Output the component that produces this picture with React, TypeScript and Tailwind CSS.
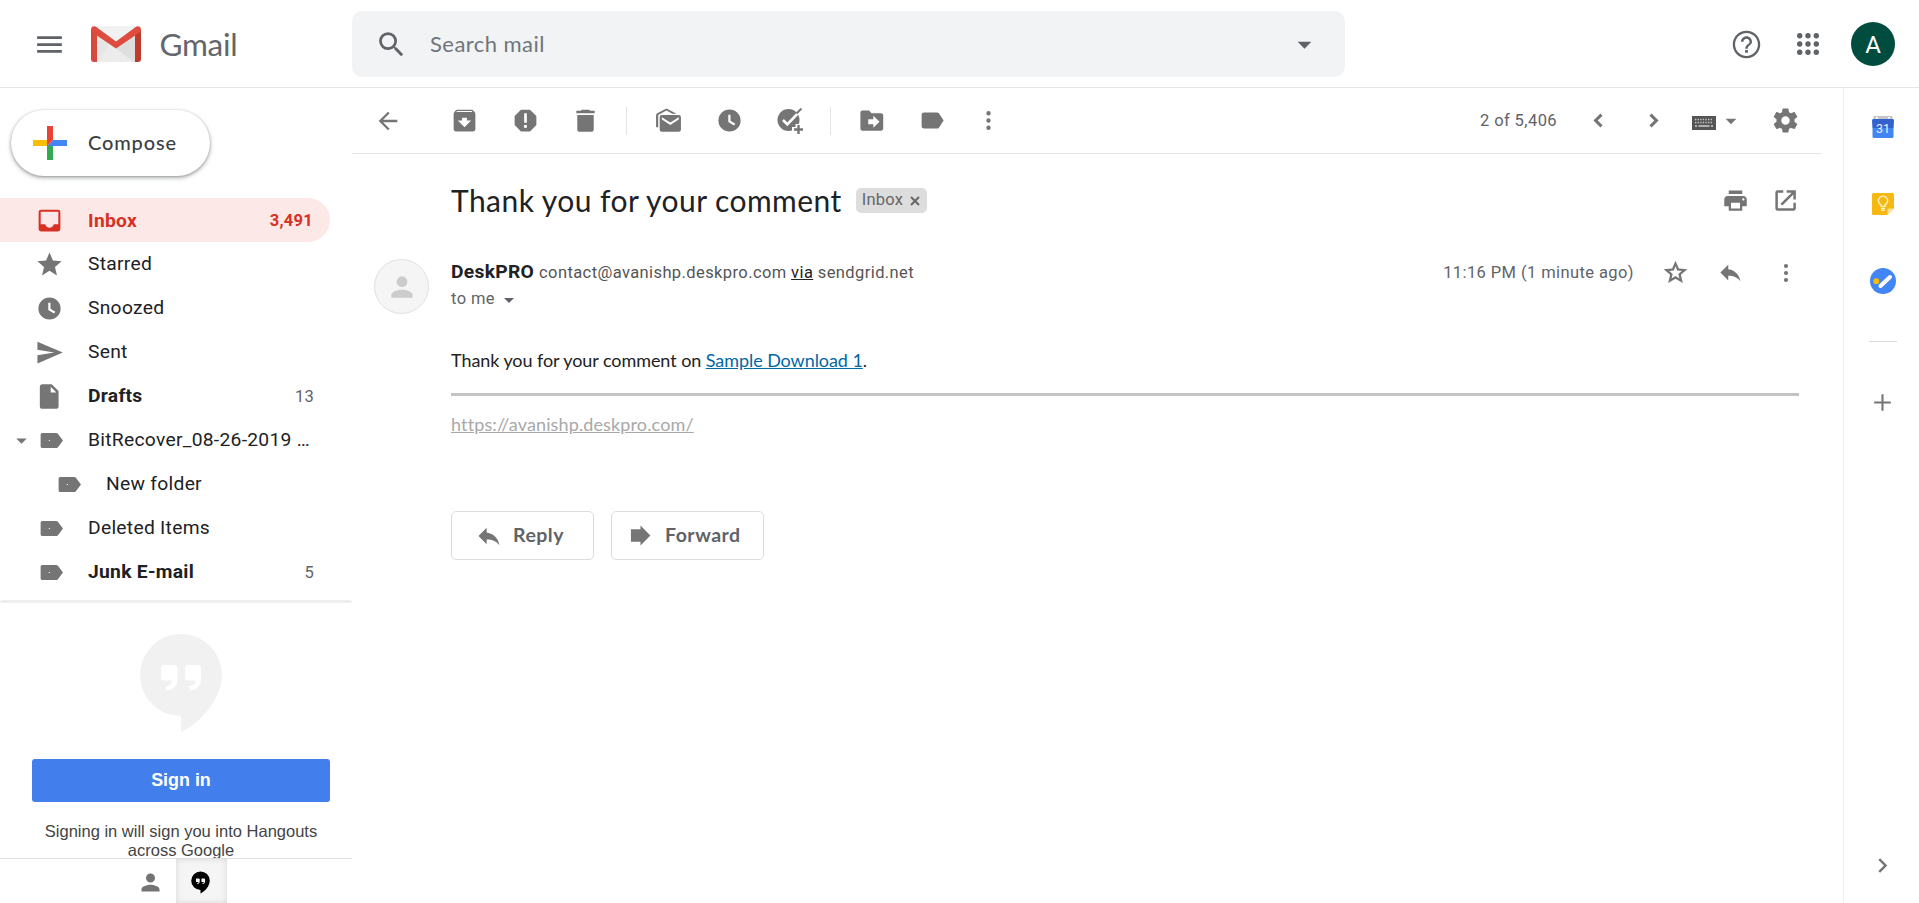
import type { ReactNode } from "react";

type IconProps = { d: string; className?: string; box?: string };

function Icon({ d, className = "size-[29px]", box = "0 0 24 24" }: IconProps) {
  return (
    <svg viewBox={box} className={`shrink-0 ${className}`} fill="currentColor" fillRule="evenodd">
      <path d={d} />
    </svg>
  );
}

const P = {
  menu: "M3 18h18v-2H3v2zm0-5h18v-2H3v2zm0-7v2h18V6H3z",
  search:
    "M15.5 14h-.79l-.28-.27A6.47 6.47 0 0 0 16 9.5 6.5 6.5 0 1 0 9.5 16c1.61 0 3.09-.59 4.23-1.57l.27.28v.79l5 4.99L20.49 19l-4.99-5zm-6 0C7.01 14 5 11.99 5 9.5S7.01 5 9.5 5 14 7.01 14 9.5 11.99 14 9.5 14z",
  down: "M7 10l5 5 5-5z",
  help: "M11 18h2v-2h-2v2zm1-16C6.48 2 2 6.48 2 12s4.48 10 10 10 10-4.48 10-10S17.52 2 12 2zm0 18.3c-4.58 0-8.3-3.72-8.3-8.3S7.42 3.7 12 3.7s8.3 3.72 8.3 8.3-3.72 8.3-8.3 8.3zM12 6c-2.21 0-4 1.79-4 4h1.8c0-1.2 1-2.2 2.2-2.2s2.2 1 2.2 2.2c0 2-3.1 1.9-3.1 5h1.8c0-2.25 3.1-2.5 3.1-5 0-2.21-1.79-4-4-4z",
  back: "M20 11H7.8l5.6-5.6L12 4l-8 8 8 8 1.4-1.4L7.8 13H20v-2z",
  archive:
    "M20.5 5.2l-1.4-1.7c-.3-.3-.7-.5-1.1-.5H6c-.5 0-.9.2-1.2.6L3.5 5.2C3.2 5.6 3 6 3 6.5V19c0 1.1.9 2 2 2h14c1.1 0 2-.9 2-2V6.5c0-.5-.2-.9-.5-1.3zM12 17.5L6.5 12H10V9.700h4V12h3.500L12 17.500zM5.100 5l.8-.9h12l.9.9H5.100z",
  report:
    "M15.730 3H8.270L3 8.270v7.460L8.270 21h7.460L21 15.730V8.270L15.730 3zM12 18.200c-.8 0-1.400-.6-1.400-1.300s.6-1.300 1.400-1.300 1.300.6 1.300 1.300-.6 1.300-1.300 1.300zm1.100-4.400h-2.200V6h2.200v7.800z",
  trash: "M5.200 19.400c0 1.100.9 2 2 2h9.600c1.100 0 2-.9 2-2V7.500H5.200v11.900zM19.600 4H16l-1-1H9L8 4H4.400v2h15.200V4z",
  mailRead:
    "M6.500 7.500h14a1.800 1.800 0 0 1 1.800 1.800v10.200a1.800 1.800 0 0 1-1.800 1.800h-14a1.800 1.800 0 0 1-1.800-1.800V9.300a1.800 1.800 0 0 1 1.800-1.800zM6.500 9.300v1.900l7 4.600 7-4.600V9.300l-7 4.400zM1.700 17.500V7.800c0-.8.4-1.400 1-1.800l7.600-4 8.400 4.400H15.200l-4.900-2.600-6.800 3.700v10z",
  clock:
    "M12 2.800a9.200 9.200 0 1 0 0 18.400 9.200 9.200 0 0 0 0-18.400zM15.800 16.200L11 13.300V7.200h1.800v5.100l4 2.400z",
  tag: "M17.300 6.100C17 5.700 16.500 5.300 15.800 5.300H5a2 2 0 0 0-2 2v9.400a2 2 0 0 0 2 2h10.800c.7 0 1.200-.3 1.500-.8L21.200 12z",
  more: "M12 7.800a1.800 1.800 0 1 0 0-3.600 1.800 1.800 0 0 0 0 3.600zm0 2.400a1.800 1.800 0 1 0 0 3.600 1.800 1.800 0 0 0 0-3.600zm0 6a1.800 1.800 0 1 0 0 3.600 1.800 1.800 0 0 0 0-3.600z",
  moveTo:
    "M20 6h-8l-2-2.300H4.500A1.700 1.700 0 0 0 2.800 5.400v13.300c0 1 .8 1.800 1.700 1.800H20c1 0 1.700-.8 1.700-1.800V7.800C21.700 6.800 21 6 20 6zm-6.500 12v-3H9.300v-4h4.200V8l5.200 5z",
  left: "M15.600 7.700L13.700 5.800 7.500 12l6.200 6.200 1.900-1.900L11.300 12z",
  right: "M10.300 5.800L8.400 7.700 12.700 12l-4.300 4.300 1.900 1.900 6.200-6.200z",
  chevron: "M10 6L8.590 7.410 13.170 12l-4.580 4.590L10 18l6-6z",
  gear: "M19.430 12.980c.04-.32.07-.64.07-.98s-.03-.66-.07-.98l2.110-1.650c.19-.15.24-.42.12-.64l-2-3.460c-.12-.22-.39-.3-.61-.22l-2.490 1c-.52-.4-1.080-.73-1.690-.98l-.38-2.650A.488.488 0 0 0 14 2h-4c-.25 0-.46.18-.49.42l-.38 2.650c-.61.25-1.170.59-1.690.98l-2.490-1c-.23-.09-.49 0-.61.22l-2 3.460c-.13.22-.07.49.12.64l2.110 1.650c-.04.32-.07.65-.07.98s.03.66.07.98l-2.110 1.650c-.19.15-.24.42-.12.64l2 3.460c.12.22.39.3.61.22l2.490-1c.52.4 1.080.73 1.690.98l.38 2.650c.03.24.24.42.49.42h4c.25 0 .46-.18.49-.42l.38-2.650c.61-.25 1.170-.59 1.690-.98l2.490 1c.23.09.49 0 .61-.22l2-3.460c.12-.22.07-.49-.12-.64l-2.110-1.650zM12 15.500c-1.930 0-3.500-1.570-3.500-3.500s1.570-3.500 3.500-3.500 3.500 1.570 3.500 3.500-1.570 3.500-3.500 3.500z",
  print:
    "M19 8H5c-1.660 0-3 1.340-3 3v6h4v4h12v-4h4v-6c0-1.660-1.340-3-3-3zm-3 11H8v-5h8v5zm3-7c-.55 0-1-.45-1-1s.45-1 1-1 1 .45 1 1-.45 1-1 1zm-1-9H6v3.300h12V3z",
  open: "M19 18.900H5.200V5.100H10V2.900H5a2 2 0 0 0-2 2v14.200a2 2 0 0 0 2 2h14.200c1.100 0 2-.9 2-2v-5H19v4.800zM13 2.900v2.200h4.400L7.600 14.900l1.600 1.600L19 6.700V11h2.200V2.900z",
  starLine:
    "M22.500 9.200l-7.500-.7L12 1.500 9 8.500l-7.500.7 5.700 4.900L5.500 21.400 12 17.500l6.500 3.900-1.700-7.300 5.700-4.900zM12 15.200l-3.500 2.100 1-4-3.100-2.700 4.100-.4L12 6.500l1.500 3.700 4.100.4-3.100 2.700 1 4L12 15.200z",
  star: "M12 17.270L18.180 21l-1.640-7.030L22 9.240l-7.190-.61L12 2 9.190 8.630 2 9.240l5.460 4.730L5.820 21z",
  reply: "M10 9V5l-7 7 7 7v-4.100c5 0 8.500 1.600 11 5.100-1-5-4-10-11-11z",
  forward: "M3.500 6.500H12V3.200L20.800 12 12 20.800V17.500H3.500z",
  send: "M2 21l21-9L2 3v6.800l14 2.200-14 2.200V21z",
  draft:
    "M6 1.800c-1.100 0-2 .9-2 2v16.400c0 1.100.9 2 2 2h11.500c1.100 0 2-.9 2-2V7.500l-5.700-5.700H6zM13 4l4.700 4.700H13V4z",
  inbox:
    "M5 3h14a2 2 0 0 1 2 2v14a2 2 0 0 1-2 2H5a2 2 0 0 1-2-2V5a2 2 0 0 1 2-2zM4.700 4.700v10.300h3.800c.4 1.700 1.800 3 3.500 3s3.100-1.300 3.500-3h3.800V4.700z",
  person: "M12 12a4 4 0 1 0 0-8 4 4 0 0 0 0 8zm0 2c-2.670 0-8 1.340-8 4v2h16v-2c0-2.660-5.330-4-8-4z",
  plus: "M20 13h-7v7h-2v-7H4v-2h7V4h2v7h7z",
  tagDot:
    "M17.300 6.500C17 6 16.500 5.700 15.800 5.700H4.300a1.300 1.300 0 0 0-1.300 1.300v10a1.300 1.300 0 0 0 1.300 1.300h11.500c.7 0 1.200-.3 1.500-.8L21.500 12zM9.800 11.600h.9v.9h-.9z",
  hangouts:
    "M42 1a41 41 0 1 0 0 82v16c20-9 41-34 41-57.500A41 41 0 0 0 42 1zM25 32h10a3.500 3.500 0 0 1 3.500 3.500V46c0 7-4 11-11.500 11.500v-4.500c4 0 6-2.500 6-5.500h-8a3 3 0 0 1-3-3v-9.500A3 3 0 0 1 25 32zM49 32h9.500a3.500 3.500 0 0 1 3.500 3.500V46c0 7-4 11-11.500 11.500v-4.500c4 0 6-2.500 6-5.500H49a3 3 0 0 1-3-3v-9.500A3 3 0 0 1 49 32z",
};

function GmailMark() {
  return (
    <svg viewBox="0 0 50 36" className="h-9 w-[50px] shrink-0">
      <path fill="#e6e6e6" d="M3 0h44v36H3z" />
      <path fill="#dedede" d="M25 22L44 7v29z" />
      <path fill="#ececec" d="M6 36l13-17.500 6 4L42 36z" />
      <path fill="#f1f1f1" d="M5 0h40L25 16z" />
      <path fill="#d54b3d" d="M0 3.500L6 7v29H3a3 3 0 0 1-3-3z" />
      <path fill="#c0392b" d="M50 3.500L44 7v29h3a3 3 0 0 0 3-3z" />
      <path fill="#de4b3f" d="M0 3.500C0 .4 3 -.7 5.200 1L25 15.600 44.800 1C47 -.7 50 .4 50 3.500c0 1.500-.7 2.500-1.800 3.300L25 22.500 1.800 6.800C.7 6 0 5 0 3.500z" />
    </svg>
  );
}

function Header() {
  return (
    <header className="flex h-[88px] shrink-0 items-center border-b border-[#e4e5e7] text-[#5f6368]">
      <div className="flex w-[352px] items-center pt-px pl-[33px]">
        <Icon d={P.menu} className="size-[33px]" />
        <div className="ml-[24.5px] flex">
          <GmailMark />
        </div>
        <span className="ml-[19px] font-[Lato] text-[31.5px] leading-9 tracking-[-0.3px] text-[#63676c]">Gmail</span>
      </div>
      <div className="flex h-[66px] w-[993px] items-center rounded-[10px] bg-[#f1f3f4] pr-6 pl-[23px]">
        <Icon d={P.search} className="mt-px size-[33px]" />
        <span className="ml-[22px] grow font-[Lato] text-[22px] tracking-[0.45px] text-[#70757a]">Search mail</span>
        <Icon d={P.down} className="mt-px size-[33px]" />
      </div>
      <div className="ml-auto flex items-center pt-px pr-6">
        <Icon d={P.help} className="size-[33px]" />
        <svg viewBox="0 0 22 22" className="ml-[34px] size-[22px]" fill="currentColor">
          {[2.7, 11, 19.3].map((y) => [2.7, 11, 19.3].map((x) => <circle key={`${x}-${y}`} cx={x} cy={y} r="2.7" />))}
        </svg>
        <span className="ml-8 flex size-11 items-center justify-center rounded-full bg-[#004d40] pt-px font-[Roboto] text-[24px] text-white">
          A
        </span>
      </div>
    </header>
  );
}

type RowProps = { icon: string; label: string; count?: string; bold?: boolean; kind?: "tag" | "child" | "parent" };

function NavRow({ icon, label, count, bold, kind }: RowProps) {
  return (
    <li className={`flex h-11 items-center text-[#202124] ${bold ? "font-bold" : ""}`}>
      <span className={`flex items-center text-[#757575] ${kind === "child" ? "w-[106px] pl-[55px]" : "w-[88px]"}`}>
        {kind === "parent" ? (
          <Icon d={P.down} className="mr-[3px] ml-[9px] size-[25px]" />
        ) : (
          kind !== "child" && <span className={kind === "tag" ? "w-[37px]" : "w-[35px]"} />
        )}
        <Icon d={icon} className="size-[29px]" />
      </span>
      <span className="w-[225px] truncate pt-px">{label}</span>
      {count && <span className="-ml-[39px] w-10 pt-[2px] text-right text-[16.5px] font-normal text-[#5f6368]">{count}</span>}
    </li>
  );
}

function Sidebar() {
  return (
    <aside className="flex w-[352px] shrink-0 flex-col font-[Roboto] text-[19.25px] tracking-[0.28px]">
      <div className="pt-[22px] pb-[22px] pl-[11px]">
        <button className="flex h-[66px] w-[199px] items-center rounded-full bg-white pl-[22px] shadow-[0_1px_3px_0_rgba(60,64,67,0.45),0_2px_4px_1px_rgba(60,64,67,0.18)]">
          <svg viewBox="0 0 34 34" className="size-[34px]">
            <path fill="#fbbc04" d="M0 14h14l3 3-3 3H0z" />
            <path fill="#4285f4" d="M17 17l3-3h14v6H14z" />
            <path fill="#34a853" d="M14 20h6v14h-6z" />
            <path fill="#ea4335" d="M14 0h6v14l-6 6z" />
          </svg>
          <span className="ml-[21px] pb-[3px] font-[Lato] text-[20px] font-medium tracking-[0.85px] text-[#3c4043]">Compose</span>
        </button>
      </div>
      <ul>
        <li className="flex h-11 w-[330px] items-center rounded-r-full bg-[#fce8e6] pr-[17px] pl-[35px] font-bold text-[#d93025]">
          <Icon d={P.inbox} />
          <span className="ml-6 grow pt-[2px]">Inbox</span>
          <span className="pt-[2px] text-[16.5px]">3,491</span>
        </li>
        <NavRow icon={P.star} label="Starred" />
        <NavRow icon={P.clock} label="Snoozed" />
        <NavRow icon={P.send} label="Sent" />
        <NavRow icon={P.draft} label="Drafts" count="13" bold />
        <NavRow icon={P.tagDot} label="BitRecover_08-26-2019 …" kind="parent" />
        <NavRow icon={P.tagDot} label="New folder" kind="child" />
        <NavRow icon={P.tagDot} label="Deleted Items" kind="tag" />
        <NavRow icon={P.tagDot} label="Junk E-mail" count="5" bold kind="tag" />
      </ul>
      <div className="mt-[6px] h-[3px] rounded-t-sm bg-[#eceef0]" />
      <div className="flex h-[255px] flex-col items-center overflow-hidden pl-[10px] font-['Liberation_Sans'] tracking-normal">
        <Icon d={P.hangouts} box="0 0 84 100" className="mt-[30px] h-[100px] w-[84px] text-[#f1f1f1]" />
        <button className="mt-[26px] h-[43px] w-[298px] shrink-0 rounded-[3px] bg-[#427fed] text-[17.9px] font-bold text-white">
          Sign in
        </button>
        <p className="mt-[20px] w-[300px] text-center text-[16.5px] leading-[19px] text-[#444]">
          Signing in will sign you into Hangouts across Google
        </p>
      </div>
      <div className="flex h-[45px] items-stretch border-t border-[#dfdfdf] pl-[125px]">
        <span className="flex w-[51px] items-center justify-center text-[#737373]">
          <Icon d={P.person} className="mt-[3px] size-[27px]" />
        </span>
        <span className="flex w-[51px] items-center justify-center bg-[#f5f5f5] text-black shadow-[inset_0_0_6px_rgba(0,0,0,0.12)]">
          <Icon d={P.hangouts} box="0 0 84 100" className="mt-[2px] mr-[2px] h-[23px] w-[19px]" />
        </span>
      </div>
    </aside>
  );
}

function Slot({ w, children }: { w: string; children: ReactNode }) {
  return <span className={`flex shrink-0 items-center justify-center ${w}`}>{children}</span>;
}

function Toolbar() {
  return (
    <div className="flex h-[66px] w-[1469px] items-center border-b border-[#e6e8eb] pl-[22px] text-[#757575]">
      <Slot w="w-[28px]"><Icon d={P.back} className="size-[28px]" /></Slot>
      <span className="w-[32px]" />
      <Slot w="w-[61px]"><Icon d={P.archive} /></Slot>
      <Slot w="w-[60px]"><Icon d={P.report} /></Slot>
      <Slot w="w-[61px]"><Icon d={P.trash} /></Slot>
      <span className="ml-[10px] h-7 w-px bg-[#e2e4e6]" />
      <span className="w-[11px]" />
      <Slot w="w-[61px]"><Icon d={P.mailRead} /></Slot>
      <Slot w="w-[60px]"><Icon d={P.clock} /></Slot>
      <Slot w="w-[61px]">
        <svg viewBox="0 0 28 28" className="size-7">
          <circle cx="12.500" cy="13" r="11" fill="#757575" />
          <path d="M7 13l4.300 4.300L25 3" fill="none" stroke="#fff" strokeWidth="2.600" />
          <path d="M20.500 6.500L25.500 1.500" fill="none" stroke="#757575" strokeWidth="2" />
          <path d="M22 17v11.500M16 22.500h12" stroke="#fff" strokeWidth="5" />
          <path d="M22.500 18v9M18 22.500h9" stroke="#757575" strokeWidth="2.400" />
        </svg>
      </Slot>
      <span className="ml-[10px] h-7 w-px bg-[#e2e4e6]" />
      <span className="w-[10px]" />
      <Slot w="w-[61px]"><Icon d={P.moveTo} /></Slot>
      <Slot w="w-[61px]"><Icon d={P.tag} /></Slot>
      <Slot w="w-[50px]"><Icon d={P.more} className="size-[29px]" /></Slot>
      <span className="ml-auto pt-[2px] font-[Roboto] text-[16.5px] tracking-[0.41px] text-[#5f6368]">2 of 5,406</span>
      <span className="ml-[28px]"><Icon d={P.left} className="size-[27px]" /></span>
      <span className="ml-[28px]"><Icon d={P.right} className="size-[27px]" /></span>
      <svg viewBox="0 0 26 16" className="mt-1 ml-[24px] h-4 w-[26px]">
        <path fill="#555" d="M1 1h24v14H1z" />
        <path d="M4 4.500h18M4 7.500h18" stroke="#ccc" strokeWidth="1.300" strokeDasharray="1.300 1.300" />
        <path d="M4 11h2M7.500 11h11M20 11h2" stroke="#ccc" strokeWidth="1.600" />
      </svg>
      <Icon d={P.down} className="ml-[1px] size-[26px]" />
      <Icon d={P.gear} className="mr-[21px] ml-[27px] size-[29px]" />
    </div>
  );
}

function Message() {
  return (
    <article className="flex w-[1491px] flex-col font-[Roboto] text-[#5f6368]">
      <div className="flex h-[93px] items-center pr-[44px] pl-[99px] text-[#757575]">
        <h1 className="font-[Lato] text-[30px] tracking-[0.45px] text-[#202124]">Thank you for your comment</h1>
        <span className="ml-[14px] flex h-[25px] w-[71px] items-center rounded-[5px] bg-[#ddd] pl-[6px] text-[16.5px] tracking-[0.2px] text-[#666]">
          Inbox
          <svg viewBox="0 0 10 10" className="ml-[7px] size-[10px]" stroke="#666" strokeWidth="2">
            <path d="M1 1l8 8M9 1L1 9" />
          </svg>
        </span>
        <Icon d={P.print} className="mr-[23px] ml-auto size-[27px]" />
        <Icon d={P.open} className="size-[27px]" />
      </div>
      <div className="flex h-[98px] items-start pr-[43px] pl-[22px]">
        <span className="mt-[12px] flex size-[55px] items-center justify-center rounded-full border border-[#e0e0e0] bg-[#f5f5f5] text-[#ccc]">
          <Icon d={P.person} className="mt-px size-[32px]" />
        </span>
        <div className="mt-[11px] ml-[22px] flex flex-col">
          <p className="h-[27px] text-[16.5px] leading-[28px] whitespace-nowrap">
            <b className="text-[19.25px] tracking-[0.28px] text-[#202124]">DeskPRO</b>
            <span className="ml-[5px] tracking-[0.4px] text-[#555]">
              contact@avanishp.deskpro.com <u className="text-[#222]">via</u> sendgrid.net
            </span>
          </p>
          <p className="flex h-[27px] items-center pt-[2px] text-[16.5px] tracking-[0.41px]">
            to me
            <Icon d={P.down} className="ml-[2px] size-6" />
          </p>
        </div>
        <div className="ml-auto flex h-[27px] items-center pt-[24px] text-[#757575]">
          <span className="mr-[28px] pt-px text-[16.5px] tracking-[0.41px] text-[#5f6368]">11:16 PM (1 minute ago)</span>
          <Icon d={P.starLine} className="size-[27px]" />
          <Icon d={P.reply} className="mx-[28px] size-[27px]" />
          <Icon d={P.more} className="size-[28px]" />
        </div>
      </div>
      <div className="mr-[44px] ml-[99px] font-[Lato] text-[18px] leading-6">
        <p className="mt-[3px] tracking-[-0.07px] text-[#222]">
          Thank you for your comment on <a className="text-[#0068a5] underline">Sample Download 1</a>.
        </p>
        <hr className="mt-[21px] border-t-[3px] border-[#c3c3c3]" />
        <p className="mt-[16px]">
          <a className="tracking-[0.13px] text-[#a8a8a8] underline">https://avanishp.deskpro.com/</a>
        </p>
      </div>
      <div className="mt-[75px] ml-[99px] flex gap-[17px] font-[Lato] text-[19.5px] font-bold tracking-[0.5px]">
        <button className="flex h-[49px] w-[143px] items-center rounded-[5px] border border-[#dadce0] pl-[23px]">
          <Icon d={P.reply} className="size-[28px] text-[#757575]" />
          <span className="ml-[10px] pb-[2px]">Reply</span>
        </button>
        <button className="flex h-[49px] w-[153px] items-center rounded-[5px] border border-[#dadce0] pl-[15px]">
          <Icon d={P.forward} className="size-[27px] text-[#757575]" />
          <span className="ml-[11px] pb-[2px]">Forward</span>
        </button>
      </div>
    </article>
  );
}

function SidePanel() {
  return (
    <aside className="flex w-[76px] flex-col items-center border-l border-[#eceef0] pl-[2px] text-[#757575]">
      <svg viewBox="0 0 22 22" className="mt-7 size-[22px]">
        <path fill="#c6c6c6" d="M1.500 0h19v4h-19z" />
        <path fill="#4285f4" d="M.5 3.500h21v17a1.500 1.500 0 0 1-1.500 1.500H2a1.500 1.500 0 0 1-1.500-1.500z" />
        <path fill="#3461cd" d="M0 4.500A1.500 1.500 0 0 1 1.500 3h19A1.500 1.500 0 0 1 22 4.500L21.300 12H.7z" />
        <path fill="#fff" d="M4 1h2v1.500H4zM16 1h2v1.500h-2z" />
        <text x="11" y="17" textAnchor="middle" fontFamily="Roboto" fontSize="12.5" fill="#e8eefc">31</text>
      </svg>
      <svg viewBox="0 0 22 22" className="mt-[55px] size-[22px]">
        <path fill="#f5b912" d="M1.500 0h19A1.500 1.500 0 0 1 22 1.500V15.500L15.500 22h-14A1.500 1.500 0 0 1 0 20.500v-19A1.500 1.500 0 0 1 1.500 0z" />
        <path fill="#fbe29a" d="M15.500 22v-5a1.500 1.500 0 0 1 1.500-1.500h5z" />
        <path fill="none" stroke="#fff3d0" strokeWidth="1.300" d="M9 13.300v-1.500a4.600 4.600 0 1 1 4 0v1.500zM9 15.500h4M9.300 17.300h3.400" />
      </svg>
      <svg viewBox="0 0 26 26" className="mt-[53px] size-[26px]">
        <circle cx="13" cy="13" r="13" fill="#4285f4" />
        <circle cx="6.300" cy="13.200" r="2.900" fill="#fbbc04" />
        <path d="M10.500 18L20 9" stroke="#fff" strokeWidth="4" strokeLinecap="round" />
      </svg>
      <span className="mt-[47px] h-px w-7 shrink-0 bg-[#dadce0]" />
      <Icon d={P.plus} className="mt-[48px] size-[25px]" />
      <span className="mt-auto mb-[23px]"><Icon d={P.chevron} className="size-[29px]" /></span>
    </aside>
  );
}

export default function App() {
  return (
    <div className="flex h-[903px] w-[1919px] flex-col overflow-hidden bg-white">
      <Header />
      <div className="flex h-[815px]">
        <Sidebar />
        <main className="flex w-[1491px] flex-col">
          <Toolbar />
          <Message />
        </main>
        <SidePanel />
      </div>
    </div>
  );
}
